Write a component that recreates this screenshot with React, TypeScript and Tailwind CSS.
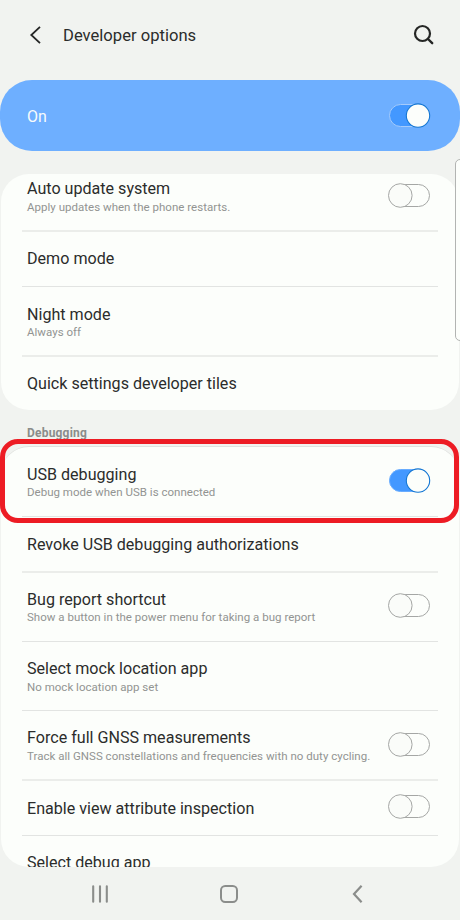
import React from "react";

function Toggle({ on, onBlue }: { on?: boolean; onBlue?: boolean }) {
  return (
    <svg width="44" height="26" viewBox="0 0 44 26" className="block shrink-0" fill="none">
      {on ? (
        <>
          <rect x="2.5" y="1.5" width="40" height="22" rx="11" fill="#4398ff" stroke={onBlue ? "#a5cbfb" : "#68acff"} />
          <circle cx="31" cy="12.6" r="11.7" fill="#fcfefb" stroke="#1577d3" strokeWidth="1.1" />
        </>
      ) : (
        <>
          <rect x="2.5" y="1.5" width="40" height="22" rx="11" stroke="#a5a7a5" />
          <circle cx="13.3" cy="12.5" r="11.8" fill="#fafcf9" stroke="#a5a7a5" />
        </>
      )}
    </svg>
  );
}

interface RowProps {
  title: string;
  titleClass: string;
  sub?: string;
  subClass?: string;
  box: string;
  on?: boolean;
  toggleClass?: string;
}

function Row({ title, titleClass, sub, subClass = "", box, on, toggleClass }: RowProps) {
  return (
    <div className={`flex items-start justify-between overflow-hidden pl-[5px] pr-[7px] ${box}`}>
      <div className="whitespace-nowrap">
        <div className={`text-[16.1px] leading-5 text-[#2b2c2b] ${titleClass}`}>{title}</div>
        {sub && <div className={`text-[11.5px] leading-4 tracking-[0.02px] text-[#929492] ${subClass}`}>{sub}</div>}
      </div>
      {toggleClass && (
        <div className={toggleClass}>
          <Toggle on={on} />
        </div>
      )}
    </div>
  );
}

const thick = "border-b-2 border-[#ebedea]";
const thin = "border-b border-[#e2e4e2]";

export default function App() {
  return (
    <div className="relative flex h-[920px] w-[460px] flex-col overflow-hidden bg-[#f1f3f0] font-['Roboto',sans-serif]">
      <header className="flex h-20 items-start">
        <svg width="14" height="20" viewBox="0 0 14 20" fill="none" className="ml-[28px] mt-[25px]">
          <path d="M12 1.8 3.3 10l8.7 8.2" stroke="#252625" strokeWidth="1.8" />
        </svg>
        <h1 className="ml-[21px] mt-[26px] whitespace-nowrap text-[16.6px] leading-5 text-[#2b2c2b]">Developer options</h1>
        <svg width="24" height="24" viewBox="0 0 24 24" fill="none" className="ml-auto mr-[24px] mt-[23px]">
          <circle cx="10.5" cy="10.5" r="7.5" stroke="#252625" strokeWidth="2.2" />
          <path d="m16 16 4.2 4.2" stroke="#252625" strokeWidth="2.4" strokeLinecap="round" />
        </svg>
      </header>

      <section className="flex h-[71px] items-start justify-between rounded-[32px] bg-[#6eafff] pl-[27px] pr-[29px]">
        <span className="mt-[27px] text-[16px] leading-5 text-[#f8fbfb]">On</span>
        <div className="mt-[23px]">
          <Toggle on onBlue />
        </div>
      </section>

      <section className="mx-px mt-[23px] flex h-[236px] flex-col overflow-hidden rounded-[28px] bg-[#fcfefb] px-[21px]">
        <Row title="Auto update system" titleClass="mt-[5px]" sub="Apply updates when the phone restarts." box={`h-[58px] ${thick}`} toggleClass="mt-[9px]" />
        <Row title="Demo mode" titleClass="mt-[17px]" box={`h-[55px] ${thin}`} />
        <Row title="Night mode" titleClass="mt-[18px]" sub="Always off" subClass="-mt-px" box={`h-[70px] ${thick}`} />
        <Row title="Quick settings developer tiles" titleClass="mt-[17px]" box="h-[53px]" />
      </section>

      <div className="flex h-[36px] items-start pl-[27px] pt-[15px]">
        <h2 className="text-[12px] font-bold leading-4 tracking-[0.2px] text-[#8a8c8a]">Debugging</h2>
      </div>

      <section className="mx-px flex h-[421px] flex-col overflow-hidden rounded-[28px] border-t border-[#e0e2df] bg-[#fcfefb] px-[21px]">
        <Row title="USB debugging" titleClass="mt-[18px]" sub="Debug mode when USB is connected" subClass="-mt-px" box={`h-[70px] ${thin}`} on toggleClass="mt-[21px]" />
        <Row title="Revoke USB debugging authorizations" titleClass="mt-[18px]" box={`h-[56px] ${thick}`} />
        <Row title="Bug report shortcut" titleClass="mt-[17px]" sub="Show a button in the power menu for taking a bug report" subClass="-mt-px" box={`h-[69px] ${thin}`} toggleClass="mt-[20px]" />
        <Row title="Select mock location app" titleClass="mt-[17px]" sub="No mock location app set" box={`h-[69px] ${thin}`} />
        <Row title="Force full GNSS measurements" titleClass="mt-[17px]" sub="Track all GNSS constellations and frequencies with no duty cycling." box={`h-[70px] ${thick}`} toggleClass="mt-[21px]" />
        <Row title="Enable view attribute inspection" titleClass="mt-[18px]" box={`h-[55px] ${thin}`} toggleClass="mt-[13px]" />
        <Row title="Select debug app" titleClass="mt-[17px]" box="h-[31px]" />
      </section>

      <nav className="flex h-[53px] items-start">
        <svg width="20" height="20" viewBox="0 0 20 20" className="ml-[90px] mt-[17px]" stroke="#8b8d8b" strokeWidth="2.1" strokeLinecap="round">
          <path d="M3.2 2.2v15.6M10 2.2v15.6M16.8 2.2v15.6" />
        </svg>
        <svg width="20" height="20" viewBox="0 0 20 20" className="ml-[109px] mt-[17px]" fill="none" stroke="#8b8d8b" strokeWidth="2">
          <rect x="2" y="2" width="16" height="16" rx="4.2" />
        </svg>
        <svg width="14" height="20" viewBox="0 0 14 20" className="ml-[110px] mt-[17px]" fill="none" stroke="#8b8d8b" strokeWidth="2.2">
          <path d="M12.6 1.8 5 10l7.6 8.2" />
        </svg>
      </nav>

      <div className="absolute left-[455px] top-[159px] h-[182px] w-[8px] rounded-l-[5px] border border-[#b2b4b2] bg-[#fcfefb]" />
      <div className="absolute left-0 top-[439px] h-[84px] w-[459px] rounded-[18px] border-[5px] border-[#ed1c24]" />
    </div>
  );
}
